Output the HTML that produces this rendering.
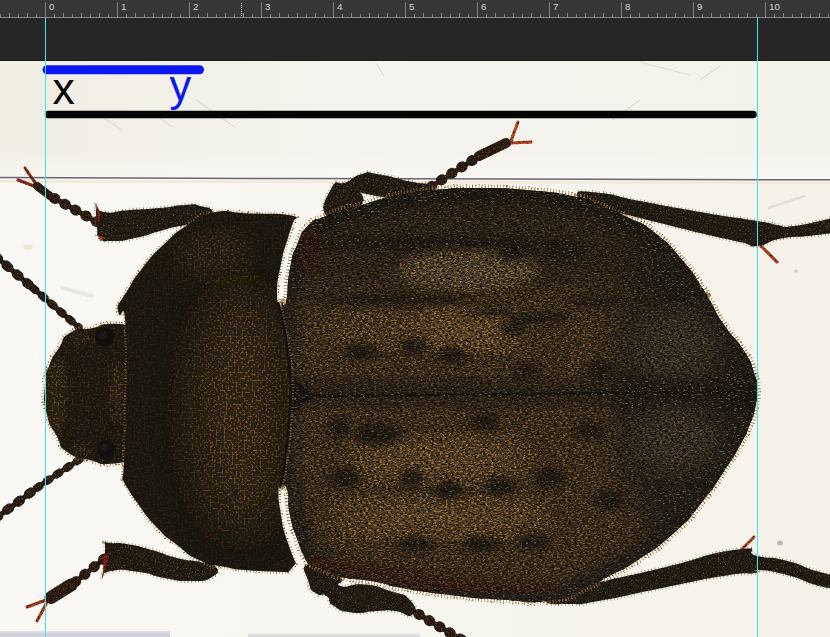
<!DOCTYPE html>
<html lang="en">
<head>
<meta charset="utf-8">
<title>Beetle measurement</title>
<style>
html,body{margin:0;padding:0;background:#262626;}
body{width:830px;height:637px;overflow:hidden;position:relative;font-family:"Liberation Sans",sans-serif;}
#stage{position:absolute;left:0;top:0;width:830px;height:637px;display:block;}
</style>
</head>
<body>
<svg id="stage" width="830" height="637" viewBox="0 0 830 637">
<defs>
  <filter id="tex" x="0" y="0" width="830" height="637" filterUnits="userSpaceOnUse" color-interpolation-filters="sRGB">
    <feTurbulence type="fractalNoise" baseFrequency="0.6" numOctaves="2" seed="7" result="n"/>
    <feColorMatrix in="n" type="matrix" values="0 0 0 0 0.46  0 0 0 0 0.34  0 0 0 0 0.16  0 4 0 0 -2.35" result="g"/>
    <feComposite in="g" in2="SourceGraphic" operator="in" result="gg"/>
    <feColorMatrix in="n" type="matrix" values="0 0 0 0 0.04  0 0 0 0 0.03  0 0 0 0 0.02  0 0 4 0 -2.1" result="d"/>
    <feComposite in="d" in2="SourceGraphic" operator="in" result="dd"/>
    <feMerge><feMergeNode in="SourceGraphic"/><feMergeNode in="gg"/><feMergeNode in="dd"/></feMerge>
  </filter>
  <filter id="texE" x="0" y="0" width="830" height="637" filterUnits="userSpaceOnUse" color-interpolation-filters="sRGB">
    <feTurbulence type="fractalNoise" baseFrequency="0.35 0.7" numOctaves="2" seed="11" result="n"/>
    <feColorMatrix in="n" type="matrix" values="0 0 0 0 0.64  0 0 0 0 0.47  0 0 0 0 0.23  0 4.5 0 0 -2.2" result="g"/>
    <feColorMatrix in="SourceGraphic" type="matrix" values="0 0 0 0 0  0 0 0 0 0  0 0 0 0 0  9 0 0 0 -1.15" result="m"/>
    <feComposite in="g" in2="m" operator="in" result="gg"/>
    <feColorMatrix in="n" type="matrix" values="0 0 0 0 0.54  0 0 0 0 0.51  0 0 0 0 0.46  4 0 0 0 -2.3" result="w"/>
    <feColorMatrix in="SourceGraphic" type="matrix" values="0 0 0 0 0  0 0 0 0 0  0 0 0 0 0  -9 0 0 0 2.0" result="mi"/>
    <feComposite in="w" in2="mi" operator="in" result="ww0"/>
    <feComposite in="ww0" in2="SourceGraphic" operator="in" result="ww"/>
    <feColorMatrix in="n" type="matrix" values="0 0 0 0 0.05  0 0 0 0 0.04  0 0 0 0 0.03  0 0 4 0 -2.0" result="d"/>
    <feComposite in="d" in2="SourceGraphic" operator="in" result="dd"/>
    <feMerge><feMergeNode in="SourceGraphic"/><feMergeNode in="gg"/><feMergeNode in="ww"/><feMergeNode in="dd"/></feMerge>
  </filter>
  <filter id="texP" x="0" y="0" width="830" height="637" filterUnits="userSpaceOnUse" color-interpolation-filters="sRGB">
    <feTurbulence type="fractalNoise" baseFrequency="0.5" numOctaves="2" seed="3" result="n"/>
    <feColorMatrix in="n" type="matrix" values="0 0 0 0 0.57  0 0 0 0 0.38  0 0 0 0 0.15  0 4.5 0 0 -2.2" result="g"/>
    <feColorMatrix in="SourceGraphic" type="matrix" values="0 0 0 0 0  0 0 0 0 0  0 0 0 0 0  10 0 0 0 -0.78" result="m"/>
    <feComposite in="g" in2="m" operator="in" result="gg"/>
    <feMerge><feMergeNode in="SourceGraphic"/><feMergeNode in="gg"/></feMerge>
  </filter>
  <filter id="b1"><feGaussianBlur stdDeviation="0.7"/></filter>
  <filter id="b3"><feGaussianBlur stdDeviation="3"/></filter>
  <filter id="b6"><feGaussianBlur stdDeviation="6"/></filter>
  <filter id="b20" x="-50%" y="-50%" width="200%" height="200%"><feGaussianBlur stdDeviation="20"/></filter>
  <filter id="b12"><feGaussianBlur stdDeviation="12"/></filter>
  <linearGradient id="gTop" x1="0" y1="0" x2="830" y2="0" gradientUnits="userSpaceOnUse">
    <stop offset="0" stop-color="#f0eee3"/><stop offset="0.4" stop-color="#f4f3ed"/><stop offset="1" stop-color="#f3f2eb"/>
  </linearGradient>
  <linearGradient id="gTop2" x1="0" y1="150" x2="0" y2="179" gradientUnits="userSpaceOnUse">
    <stop offset="0" stop-color="#faf9f5" stop-opacity="0"/><stop offset="1" stop-color="#faf9f5" stop-opacity="0.8"/>
  </linearGradient>
  <linearGradient id="gLow" x1="0" y1="0" x2="830" y2="0" gradientUnits="userSpaceOnUse">
    <stop offset="0" stop-color="#f9f8f4"/><stop offset="0.4" stop-color="#f7f6f0"/><stop offset="1" stop-color="#f5f3ea"/>
  </linearGradient>
  <path id="pEly" d="M282.0,299.0C282.0,299.0 283.3,312.0 286.0,302.0C288.7,292.0 286.2,288.3 290.0,269.0C293.8,249.7 291.2,258.7 297.5,244.0C303.8,229.3 300.2,234.0 309.0,225.0C317.8,216.0 312.0,222.3 324.0,217.0C336.0,211.7 332.3,213.0 345.0,209.0C357.7,205.0 348.7,208.7 362.0,205.0C375.3,201.3 369.0,202.0 385.0,198.0C401.0,194.0 391.7,195.8 410.0,193.0C428.3,190.2 418.0,191.2 440.0,189.5C462.0,187.8 447.3,187.8 476.0,188.0C504.7,188.2 492.3,187.0 526.0,190.0C559.7,193.0 552.3,192.0 577.0,197.0C601.7,202.0 583.3,198.3 600.0,205.0C616.7,211.7 608.7,207.7 627.0,217.0C645.3,226.3 636.3,218.3 655.0,233.0C673.7,247.7 667.2,242.5 683.0,261.0C698.8,279.5 693.5,275.2 702.5,288.5C711.5,301.8 702.8,288.8 710.0,301.0C717.2,313.2 712.7,308.3 724.0,325.0C735.3,341.7 734.0,335.0 744.0,351.0C754.0,367.0 749.7,360.3 754.0,373.0C758.3,385.7 756.5,378.0 757.0,389.0C757.5,400.0 758.1,393.5 755.4,406.0C752.7,418.5 754.1,413.6 749.0,426.6C743.9,439.6 748.3,430.2 740.0,445.0C731.7,459.8 736.7,452.0 724.0,471.0C711.3,490.0 718.7,481.4 702.0,502.0C685.3,522.6 695.7,513.2 674.0,532.7C652.3,552.2 658.7,546.1 637.0,560.5C615.3,574.9 624.7,567.5 609.0,576.0C593.3,584.5 609.0,578.0 590.0,586.0C571.0,594.0 581.7,595.5 552.0,600.0C522.3,604.5 534.8,601.2 501.0,599.5C467.2,597.8 484.3,599.0 450.6,595.0C416.9,591.0 424.5,591.8 400.0,587.5C375.5,583.2 397.3,585.7 377.0,582.0C356.7,578.3 355.8,580.2 339.0,576.5C322.2,572.8 336.6,575.2 326.6,571.0C316.6,566.8 309.0,564.0 309.0,564.0C309.0,564.0 308.8,566.0 305.0,558.0C301.2,550.0 302.5,554.3 297.5,540.0C292.5,525.7 293.5,531.8 290.0,515.0C286.5,498.2 289.7,498.3 287.0,489.6C284.3,480.9 282.0,489.0 282.0,489.0C282.0,489.0 280.0,470.0 280.0,470.0C280.0,470.0 280.0,320.0 280.0,320.0C280.0,320.0 282.0,299.0 282.0,299.0Z"/>
  <path id="pPro" d="M213.0,212.5C233.0,209.2 225.0,212.7 250.0,213.5C275.0,214.3 273.2,213.0 288.0,215.0C302.8,217.0 294.5,219.5 294.5,219.5C294.5,219.5 293.1,221.2 288.6,236.0C284.1,250.8 284.9,244.7 281.0,264.0C277.1,283.3 277.3,280.3 277.0,294.0C276.7,307.7 278.3,298.1 280.0,305.0C281.7,311.9 279.1,299.9 282.0,314.6C284.9,329.3 285.6,326.0 288.8,349.0C292.0,372.0 290.9,360.7 291.5,383.7C292.1,406.7 292.0,394.9 290.5,418.0C289.0,441.1 289.8,431.0 287.0,453.0C284.2,475.0 284.8,471.8 282.0,484.0C279.2,496.2 278.8,479.3 278.5,489.6C278.2,499.9 278.2,498.2 281.0,515.0C283.8,531.8 282.0,524.0 287.0,540.0C292.0,556.0 296.0,563.0 296.0,563.0C296.0,563.0 288.6,572.0 288.6,572.0C288.6,572.0 271.8,572.3 250.6,570.6C229.4,568.9 241.9,570.4 225.0,567.0C208.1,563.6 216.0,567.8 200.0,560.5C184.0,553.2 191.3,556.0 177.0,545.0C162.7,534.0 170.4,541.9 157.0,527.6C143.6,513.3 148.4,518.5 136.7,502.0C125.0,485.5 122.0,478.0 122.0,478.0C122.0,478.0 122.7,487.0 124.0,461.0C125.3,435.0 125.4,445.3 126.0,400.0C126.6,354.7 128.0,353.7 125.7,325.0C123.4,296.3 121.6,320.7 119.0,314.0C116.4,307.3 118.0,305.0 118.0,305.0C118.0,305.0 118.7,303.7 126.6,291.7C134.5,279.7 129.1,285.0 141.7,269.0C154.3,253.0 148.4,258.9 164.5,243.7C180.6,228.5 173.8,233.8 190.0,223.4C206.2,213.0 193.0,215.8 213.0,212.5Z"/>
  <path id="pHead" d="M128.0,325.0C128.0,325.0 118.7,323.0 107.0,324.0C95.3,325.0 105.1,325.2 93.0,328.0C80.9,330.8 81.9,325.8 70.6,332.5C59.3,339.2 66.0,337.2 59.0,348.0C52.0,358.8 54.2,352.7 49.5,365.0C44.8,377.3 46.0,369.0 45.0,385.0C44.0,401.0 42.8,396.1 46.6,413.0C50.4,429.9 49.4,422.4 56.5,435.6C63.6,448.8 55.8,444.1 68.0,452.6C80.2,461.1 80.0,457.2 93.0,461.0C106.0,464.8 95.3,464.0 107.0,464.0C118.7,464.0 128.0,461.0 128.0,461.0C128.0,461.0 128.0,325.0 128.0,325.0Z"/>
  <clipPath id="cEly"><use href="#pEly"/></clipPath>
  <clipPath id="cPro"><use href="#pPro"/></clipPath>
  <clipPath id="cHead"><use href="#pHead"/></clipPath>
  <clipPath id="cPhoto"><rect x="0" y="61" width="830" height="576"/></clipPath>
</defs>

<!-- application chrome -->
<rect x="0" y="0" width="830" height="637" fill="#262626"/>
<rect x="0" y="0" width="830" height="18" fill="#363636"/>
<rect x="0" y="0" width="830" height="1" fill="#3c3c3c"/>
<rect x="0" y="60" width="830" height="1" fill="#1c1c1c"/>

<!-- photo -->
<g clip-path="url(#cPhoto)">
  <rect x="0" y="61" width="830" height="576" fill="url(#gLow)"/>
  <rect x="0" y="61" width="830" height="118" fill="url(#gTop)"/>
  <rect x="0" y="150" width="830" height="29" fill="url(#gTop2)"/>
  <rect x="758" y="181" width="72" height="456" fill="#f4f2e9"/>
  <!-- glass edge -->
  <path d="M0,181.3 L830,183" stroke="#f3ead6" stroke-width="2.5" fill="none"/>
  <path d="M0,177.4 L300,178.6 L830,179.8" stroke="#6a6678" stroke-width="1.5" fill="none"/>
  <rect x="0" y="631" width="170" height="1.5" fill="#eadcd6"/>
  <rect x="0" y="632.5" width="170" height="5" fill="#cfd0db"/>
  <rect x="248" y="633.5" width="172" height="1" fill="#ece2dc"/>
  <rect x="248" y="634.5" width="172" height="3" fill="#dcdce2"/>
  <g stroke="#d9d6cf" stroke-width="1.2" fill="none" opacity="0.8">
    <path d="M104,118 L122,130"/><path d="M196,100 L236,128"/><path d="M160,118 L172,127"/>
    <path d="M376,63 L384,76"/><path d="M640,62 L690,75"/><path d="M720,66 L700,80"/>
    <path d="M805,196 L768,208" stroke-width="2"/><path d="M612,120 L640,100"/>
    <path d="M735,455 q4,-14 0,-22 q-3,-6 -7,2" stroke="#cfcac0"/>
    <path d="M308,572 q3,4 0,10 q-2,5 2,9" stroke="#cfcac0"/>
  </g>
  <ellipse cx="780" cy="543" rx="3" ry="2.5" fill="#bdb9b3"/>
  <ellipse cx="796" cy="271" rx="2" ry="1.5" fill="#cfcbc3"/>
  <ellipse cx="28" cy="247" rx="5" ry="3" fill="#ece6da"/>
  <path d="M62,288 L92,296" stroke="#e6e3dc" stroke-width="4" stroke-linecap="round" opacity="0.8"/>

  <g filter="url(#tex)">
  <!-- antennae -->
  <path d="M-4,256.6 L79,327.5" stroke="#2a1b14" stroke-width="5" fill="none"/>
  <path d="M-4,256.6 L30,285.5" stroke="#2b1e16" stroke-width="9.5" fill="none" stroke-linecap="round" stroke-dasharray="3 10.5"/>
  <path d="M33,288 L79,327.5" stroke="#2b1e16" stroke-width="8" fill="none" stroke-linecap="round" stroke-dasharray="3 9"/>
  <path d="M81,458.5 L46,481.5 L22,499 L-4,518" stroke="#2a1b14" stroke-width="5" fill="none"/>
  <path d="M-4,518 L22,499 L34,490" stroke="#2b1e16" stroke-width="9.5" fill="none" stroke-linecap="round" stroke-dasharray="3 10.5"/>
  <path d="M37,488 L46,481.5 L81,458.5" stroke="#2b1e16" stroke-width="8" fill="none" stroke-linecap="round" stroke-dasharray="3 9"/>

  <!-- front leg (top) -->
  <path d="M36,184 L25,168 M34,186 L18,180" stroke="#8a2a18" stroke-width="3" stroke-linecap="round" fill="none"/>
  <path d="M97,222 L52,197" stroke="#2e1d15" stroke-width="5" fill="none"/><path d="M97,222 L52,197" stroke="#2e1d15" stroke-width="10.5" fill="none" stroke-linecap="round" stroke-dasharray="1 11"/><path d="M50,196 L37,186" stroke="#2e1d15" stroke-width="8" fill="none" stroke-linecap="round"/>
  <path d="M96.0,204.0C96.0,204.0 92.7,210.0 104.0,212.0C115.3,214.0 111.3,211.3 130.0,210.0C148.7,208.7 141.7,209.7 160.0,208.0C178.3,206.3 171.7,205.7 185.0,205.0C198.3,204.3 190.7,203.7 200.0,206.0C209.3,208.3 210.3,206.7 213.0,212.0C215.7,217.3 219.0,217.3 208.0,222.0C197.0,226.7 196.0,223.0 180.0,226.0C164.0,229.0 175.0,227.0 160.0,231.0C145.0,235.0 151.0,234.7 135.0,238.0C119.0,241.3 123.7,241.0 112.0,241.0C100.3,241.0 105.0,243.0 100.0,238.0C95.0,233.0 98.3,237.3 97.0,226.0C95.7,214.7 96.0,204.0 96.0,204.0Z" fill="#231c15" stroke="#9c7a48" stroke-width="4" stroke-dasharray="0.7 2.8" stroke-opacity="0.65" paint-order="stroke"/>
  <path d="M96,204 L101,214 L98,226 Z" fill="#7a1f14"/>
  <path d="M98,236 L106,238 L100,241 Z" fill="#c04a30"/>

  <!-- front leg (bottom) -->
  <path d="M46,600 L27,607 M47,602 L37,621" stroke="#b23a20" stroke-width="3" stroke-linecap="round" fill="none"/>
  <path d="M104,559 L74,583" stroke="#2e1d15" stroke-width="5" fill="none"/><path d="M104,559 L74,583" stroke="#2e1d15" stroke-width="10.5" fill="none" stroke-linecap="round" stroke-dasharray="1 11"/><path d="M71,585 L51,597.5" stroke="#2e1d15" stroke-width="13" fill="none" stroke-linecap="round"/>
  <path d="M104.0,541.5C104.0,541.5 103.5,542.2 111.0,543.0C118.5,543.8 112.9,541.7 126.6,544.0C140.3,546.3 135.2,545.3 152.0,550.0C168.8,554.7 161.0,554.0 177.0,558.0C193.0,562.0 187.3,559.3 200.0,562.0C212.7,564.7 211.0,561.0 215.0,566.0C219.0,571.0 220.3,572.0 212.0,577.0C203.7,582.0 205.8,580.7 190.0,581.0C174.2,581.3 181.5,581.0 164.5,578.0C147.5,575.0 156.8,574.3 139.0,572.0C121.2,569.7 123.2,569.0 111.0,571.0C98.8,573.0 102.5,578.0 102.5,578.0C102.5,578.0 104.5,565.2 105.0,553.0C105.5,540.8 104.0,541.5 104.0,541.5Z" fill="#231c15" stroke="#9c7a48" stroke-width="4" stroke-dasharray="0.7 2.8" stroke-opacity="0.65" paint-order="stroke"/>
  <path d="M104,553 L109,556 L102.5,578 Z" fill="#8a1f14"/>

  <!-- mid leg (top) -->
  <path d="M511,141 L518,122 M511,143 L531,142" stroke="#c2461c" stroke-width="3" stroke-linecap="round" fill="none"/>
  <path d="M421,193 L476,158" stroke="#2e1d15" stroke-width="5" fill="none"/><path d="M421,193 L476,158" stroke="#2e1d15" stroke-width="10.5" fill="none" stroke-linecap="round" stroke-dasharray="1 11"/><path d="M479,156 L506,143" stroke="#2e1d15" stroke-width="10" fill="none" stroke-linecap="round"/>
  <path d="M325.0,214.0C320.5,206.7 325.9,198.3 331.6,188.0C337.3,177.7 336.9,185.0 342.0,183.0C347.1,181.0 340.3,185.0 347.0,182.0C353.7,179.0 352.0,176.7 362.0,174.0C372.0,171.3 361.0,171.5 377.0,174.0C393.0,176.5 392.3,177.6 410.0,181.6C427.7,185.6 423.3,181.2 430.0,186.0C436.7,190.8 436.7,191.3 430.0,196.0C423.3,200.7 426.0,199.7 410.0,200.0C394.0,200.3 398.8,199.7 382.0,197.0C365.2,194.3 359.5,192.0 359.5,192.0C359.5,192.0 366.8,198.0 362.0,204.0C357.2,210.0 357.3,206.7 345.0,210.0C332.7,213.3 329.5,221.3 325.0,214.0Z" fill="#231c15" stroke="#9c7a48" stroke-width="4" stroke-dasharray="0.7 2.8" stroke-opacity="0.65" paint-order="stroke"/>

  <!-- mid leg (bottom) -->
  <path d="M398,602 L462,640" stroke="#2e1d15" stroke-width="5" fill="none"/><path d="M398,602 L462,640" stroke="#2e1d15" stroke-width="10.5" fill="none" stroke-linecap="round" stroke-dasharray="1 11"/><path d="M462,640 L470,645" stroke="#2e1d15" stroke-width="10" fill="none" stroke-linecap="round"/>
  <path d="M309.0,564.0C319.0,561.6 328.5,568.4 339.0,575.7C349.5,583.0 332.0,583.0 340.5,586.0C349.0,589.0 348.1,582.9 364.6,584.6C381.1,586.3 374.9,585.9 390.0,591.0C405.1,596.1 402.7,592.0 410.0,600.0C417.3,608.0 417.0,611.3 412.0,615.0C407.0,618.7 406.7,612.3 395.0,611.0C383.3,609.7 391.3,610.5 377.0,611.0C362.7,611.5 366.3,614.1 352.0,612.4C337.7,610.7 342.5,611.5 334.0,606.0C325.5,600.5 332.4,600.2 326.6,596.0C320.8,591.8 322.4,597.8 316.5,593.5C310.6,589.2 311.5,592.8 309.0,583.0C306.5,573.2 299.0,566.4 309.0,564.0Z" fill="#231c15" stroke="#9c7a48" stroke-width="4" stroke-dasharray="0.7 2.8" stroke-opacity="0.65" paint-order="stroke"/>

  <!-- hind leg (top) -->
  <path d="M759,244 L777,262" stroke="#b43c1c" stroke-width="3" stroke-linecap="round" fill="none"/>
  <path d="M577.0,195.0C577.0,190.0 579.0,191.0 600.0,193.0C621.0,195.0 606.7,194.7 640.0,201.0C673.3,207.3 661.0,205.3 700.0,212.0C739.0,218.7 731.3,216.7 757.0,221.0C782.7,225.3 764.7,223.3 777.0,225.0C789.3,226.7 775.7,228.3 794.0,226.0C812.3,223.7 832.0,218.0 832.0,218.0C832.0,218.0 832.0,233.0 832.0,233.0C832.0,233.0 825.3,234.1 808.0,236.0C790.7,237.9 797.0,235.4 780.0,238.7C763.0,242.0 770.3,244.9 757.0,246.0C743.7,247.1 759.0,246.3 740.0,242.0C721.0,237.7 726.7,239.3 700.0,233.0C673.3,226.7 684.1,229.0 660.0,223.0C635.9,217.0 647.7,220.0 627.7,215.0C607.7,210.0 616.9,214.7 600.0,208.0C583.1,201.3 577.0,200.0 577.0,195.0Z" fill="#231c15" stroke="#9c7a48" stroke-width="4" stroke-dasharray="0.7 2.8" stroke-opacity="0.65" paint-order="stroke"/>

  <!-- hind leg (bottom) -->
  <path d="M740,551 L754,537" stroke="#c2461c" stroke-width="3" stroke-linecap="round" fill="none"/>
  <path d="M545.0,601.0C541.7,597.0 541.7,598.3 560.0,592.0C578.3,585.7 566.0,590.0 600.0,582.0C634.0,574.0 616.7,578.8 662.0,568.0C707.3,557.2 704.3,553.7 736.0,549.7C767.7,545.7 740.5,552.4 757.0,556.0C773.5,559.6 765.8,555.5 785.5,560.5C805.2,565.5 800.5,566.3 816.0,571.0C831.5,575.7 832.0,574.5 832.0,574.5C832.0,574.5 832.0,588.0 832.0,588.0C832.0,588.0 831.5,589.5 816.0,585.0C800.5,580.5 805.2,579.5 785.5,574.5C765.8,569.5 767.3,570.5 757.0,570.0C746.7,569.5 765.7,571.0 754.6,573.0C743.5,575.0 754.5,571.0 723.6,576.0C692.7,581.0 703.2,579.8 662.0,588.0C620.8,596.2 630.7,595.4 600.0,600.7C569.3,606.0 588.3,603.9 570.0,604.0C551.7,604.1 548.3,605.0 545.0,601.0Z" fill="#231c15" stroke="#9c7a48" stroke-width="4" stroke-dasharray="0.7 2.8" stroke-opacity="0.65" paint-order="stroke"/>

  </g>
  <g filter="url(#texP)">
  <!-- head -->
  <use href="#pHead" fill="none" stroke="#a8844e" stroke-width="5" stroke-dasharray="0.7 2.2" opacity="0.7"/>
  <use href="#pHead" fill="#1b1610"/>
  <g clip-path="url(#cHead)">
    <ellipse cx="57" cy="395" rx="10" ry="40" fill="#2b2116" opacity="0.7" filter="url(#b3)"/>
    <ellipse cx="117" cy="392" rx="7" ry="32" fill="#2b2116" opacity="0.7" filter="url(#b3)"/>
    <ellipse cx="82" cy="340" rx="12" ry="7" fill="#2b2116" opacity="0.5" filter="url(#b3)"/>
    <ellipse cx="82" cy="450" rx="12" ry="7" fill="#2b2116" opacity="0.5" filter="url(#b3)"/>
    <circle cx="104.6" cy="337" r="9.5" fill="#12100e"/>
    <circle cx="106" cy="449.5" r="9.5" fill="#12100e"/>
    <circle cx="103" cy="335" r="4" fill="#2a2826" opacity="0.35" filter="url(#b1)"/>
    <circle cx="104.5" cy="447.5" r="4" fill="#2a2826" opacity="0.35" filter="url(#b1)"/>
  </g>
  </g>
  <g filter="url(#texE)">
  <!-- elytra -->
  <use href="#pEly" fill="none" stroke="#a8844e" stroke-width="7" stroke-dasharray="0.7 2.4" opacity="0.75"/>
  <use href="#pEly" fill="#34281a"/>
  <g clip-path="url(#cEly)">
    <use href="#pEly" fill="none" stroke="#221a13" stroke-width="28" filter="url(#b6)"/>
    <ellipse cx="700" cy="393" rx="85" ry="170" fill="#241e19" opacity="0.9" filter="url(#b12)"/>
    <rect x="270" y="175" width="400" height="112" fill="#1d1610" opacity="0.5" filter="url(#b12)"/>
    <rect x="270" y="378" width="500" height="30" fill="#1d1610" opacity="0.5" filter="url(#b6)"/>
    <ellipse cx="468" cy="330" rx="55" ry="20" fill="#66502e" opacity="0.7" filter="url(#b12)"/>
    <ellipse cx="380" cy="330" rx="50" ry="18" fill="#57452a" opacity="0.4" filter="url(#b12)"/>
    <ellipse cx="440" cy="460" rx="90" ry="22" fill="#66502e" opacity="0.6" filter="url(#b12)"/>
    <ellipse cx="440" cy="518" rx="110" ry="20" fill="#66502e" opacity="0.6" filter="url(#b12)"/>
    <ellipse cx="468" cy="270" rx="70" ry="20" fill="#5c5447" opacity="0.55" filter="url(#b6)"/>
    <ellipse cx="675" cy="345" rx="45" ry="35" fill="#4a443c" opacity="0.35" filter="url(#b12)"/>
    <ellipse cx="675" cy="440" rx="45" ry="35" fill="#4a443c" opacity="0.35" filter="url(#b12)"/>
    <ellipse cx="308" cy="246" rx="11" ry="24" fill="#2c120d" opacity="0.75" filter="url(#b3)"/>
    <path d="M300,560 L400,578 L500,590 L560,590" stroke="#35190f" stroke-width="14" fill="none" opacity="0.6" filter="url(#b3)"/>
    <g fill="#1b140f" opacity="0.8" filter="url(#b3)"><ellipse cx="403" cy="243" rx="14" ry="7"/><ellipse cx="513" cy="253" rx="15" ry="8"/><ellipse cx="567" cy="251" rx="15" ry="8"/><ellipse cx="440" cy="243" rx="130" ry="4"/><ellipse cx="390" cy="300" rx="82" ry="4.5"/><ellipse cx="490" cy="312" rx="22" ry="5"/><ellipse cx="538" cy="318" rx="32" ry="5"/><ellipse cx="595" cy="302" rx="28" ry="5"/><ellipse cx="362" cy="352" rx="16" ry="8"/><ellipse cx="415" cy="346" rx="14" ry="8"/><ellipse cx="452" cy="355" rx="15" ry="8"/><ellipse cx="513" cy="329" rx="14" ry="8"/><ellipse cx="526" cy="370" rx="14" ry="7"/><ellipse cx="378" cy="435" rx="24" ry="11"/><ellipse cx="338" cy="427" rx="12" ry="9"/><ellipse cx="485" cy="421" rx="16" ry="9"/><ellipse cx="411" cy="478" rx="13" ry="10"/><ellipse cx="448" cy="490" rx="14" ry="10"/><ellipse cx="501" cy="486" rx="15" ry="10"/><ellipse cx="550" cy="478" rx="15" ry="10"/><ellipse cx="345" cy="478" rx="15" ry="10"/><ellipse cx="415" cy="544" rx="18" ry="8"/><ellipse cx="481" cy="544" rx="18" ry="8"/><ellipse cx="534" cy="542" rx="16" ry="8"/><ellipse cx="600" cy="370" rx="14" ry="9"/><ellipse cx="590" cy="430" rx="14" ry="9"/><ellipse cx="610" cy="500" rx="14" ry="10"/></g>
    <path d="M300,396 L757,392" stroke="#17120d" stroke-width="2.5" fill="none"/>
    <path d="M286,372 L314.7,396 L286,419 Z" fill="#17120d"/>
  </g>
  </g>
  <g filter="url(#texP)">
  <!-- pronotum -->
  <use href="#pPro" fill="none" stroke="#a8844e" stroke-width="4" stroke-dasharray="0.7 2.2" opacity="0.7"/>
  <use href="#pPro" fill="#19150f"/>
  <g clip-path="url(#cPro)">
    <ellipse cx="240" cy="410" rx="46" ry="120" fill="#2b2116" opacity="0.9" filter="url(#b20)"/><ellipse cx="215" cy="255" rx="40" ry="25" fill="#2b2116" opacity="0.5" filter="url(#b12)"/>
    <path d="M277,294 L282,314.6 L288.8,349 L291.5,383.7 L290.5,418 L287,453 L282,484" stroke="#120e0a" stroke-width="4" fill="none" filter="url(#b1)"/>
  </g>
  </g>
</g>

<!-- drawn annotations -->
<path d="M47,69.7 L199.5,69.7" stroke="#0b18f2" stroke-width="9" stroke-linecap="round" fill="none"/>
<path d="M48.5,114.5 L753,114.5" stroke="#050505" stroke-width="7.5" stroke-linecap="round" fill="none"/>
<text x="52.4" y="103.7" font-family="Liberation Sans, sans-serif" font-size="44.5" fill="#0a0a0a">x</text>
<text x="169.4" y="100.5" font-family="Liberation Sans, sans-serif" font-size="43.5" fill="#0b18f2">y</text>

<!-- guides -->
<rect x="45" y="18" width="1" height="619" fill="#3ce8ef"/>
<rect x="757" y="18" width="1" height="619" fill="#3ce8ef"/>

<!-- ruler -->
<g id="ruler">
  <rect x="0" y="17" width="830" height="1" fill="#8c8c8c"/>
  <path d="M0.5,14V17M9.5,13V17M18.5,14V17M27.5,13V17M36.5,14V17M45.5,2V17M54.5,14V17M63.5,13V17M72.5,14V17M81.5,13V17M90.5,14V17M99.5,13V17M108.5,14V17M117.5,2V17M126.5,14V17M135.5,13V17M144.5,14V17M153.5,13V17M162.5,14V17M171.5,13V17M180.5,14V17M189.5,2V17M198.5,14V17M207.5,13V17M216.5,14V17M225.5,13V17M234.5,14V17M243.5,13V17M252.5,14V17M261.5,2V17M270.5,14V17M279.5,13V17M288.5,14V17M297.5,13V17M306.5,14V17M315.5,13V17M324.5,14V17M333.5,2V17M342.5,14V17M351.5,13V17M360.5,14V17M369.5,13V17M378.5,14V17M387.5,13V17M396.5,14V17M405.5,2V17M414.5,14V17M423.5,13V17M432.5,14V17M441.5,13V17M450.5,14V17M459.5,13V17M468.5,14V17M477.5,2V17M486.5,14V17M495.5,13V17M504.5,14V17M513.5,13V17M522.5,14V17M531.5,13V17M540.5,14V17M549.5,2V17M558.5,14V17M567.5,13V17M576.5,14V17M585.5,13V17M594.5,14V17M603.5,13V17M612.5,14V17M621.5,2V17M630.5,14V17M639.5,13V17M648.5,14V17M657.5,13V17M666.5,14V17M675.5,13V17M684.5,14V17M693.5,2V17M702.5,14V17M711.5,13V17M720.5,14V17M729.5,13V17M738.5,14V17M747.5,13V17M756.5,14V17M765.5,2V17M774.5,14V17M783.5,13V17M792.5,14V17M801.5,13V17M810.5,14V17M819.5,13V17M828.5,14V17" stroke="#848484" stroke-width="1" fill="none" shape-rendering="crispEdges"/>
  <g font-family="Liberation Sans, sans-serif" font-size="9.8" fill="#d4d4d4"><text x="49" y="10">0</text><text x="121" y="10">1</text><text x="193" y="10">2</text><text x="265" y="10">3</text><text x="337" y="10">4</text><text x="409" y="10">5</text><text x="481" y="10">6</text><text x="553" y="10">7</text><text x="625" y="10">8</text><text x="697" y="10">9</text><text x="769" y="10">10</text></g>
  <path d="M241.5,3V16" stroke="#e8e8e8" stroke-width="1" stroke-dasharray="1 1" fill="none" shape-rendering="crispEdges"/>
</g>
</svg>
</body>
</html>
